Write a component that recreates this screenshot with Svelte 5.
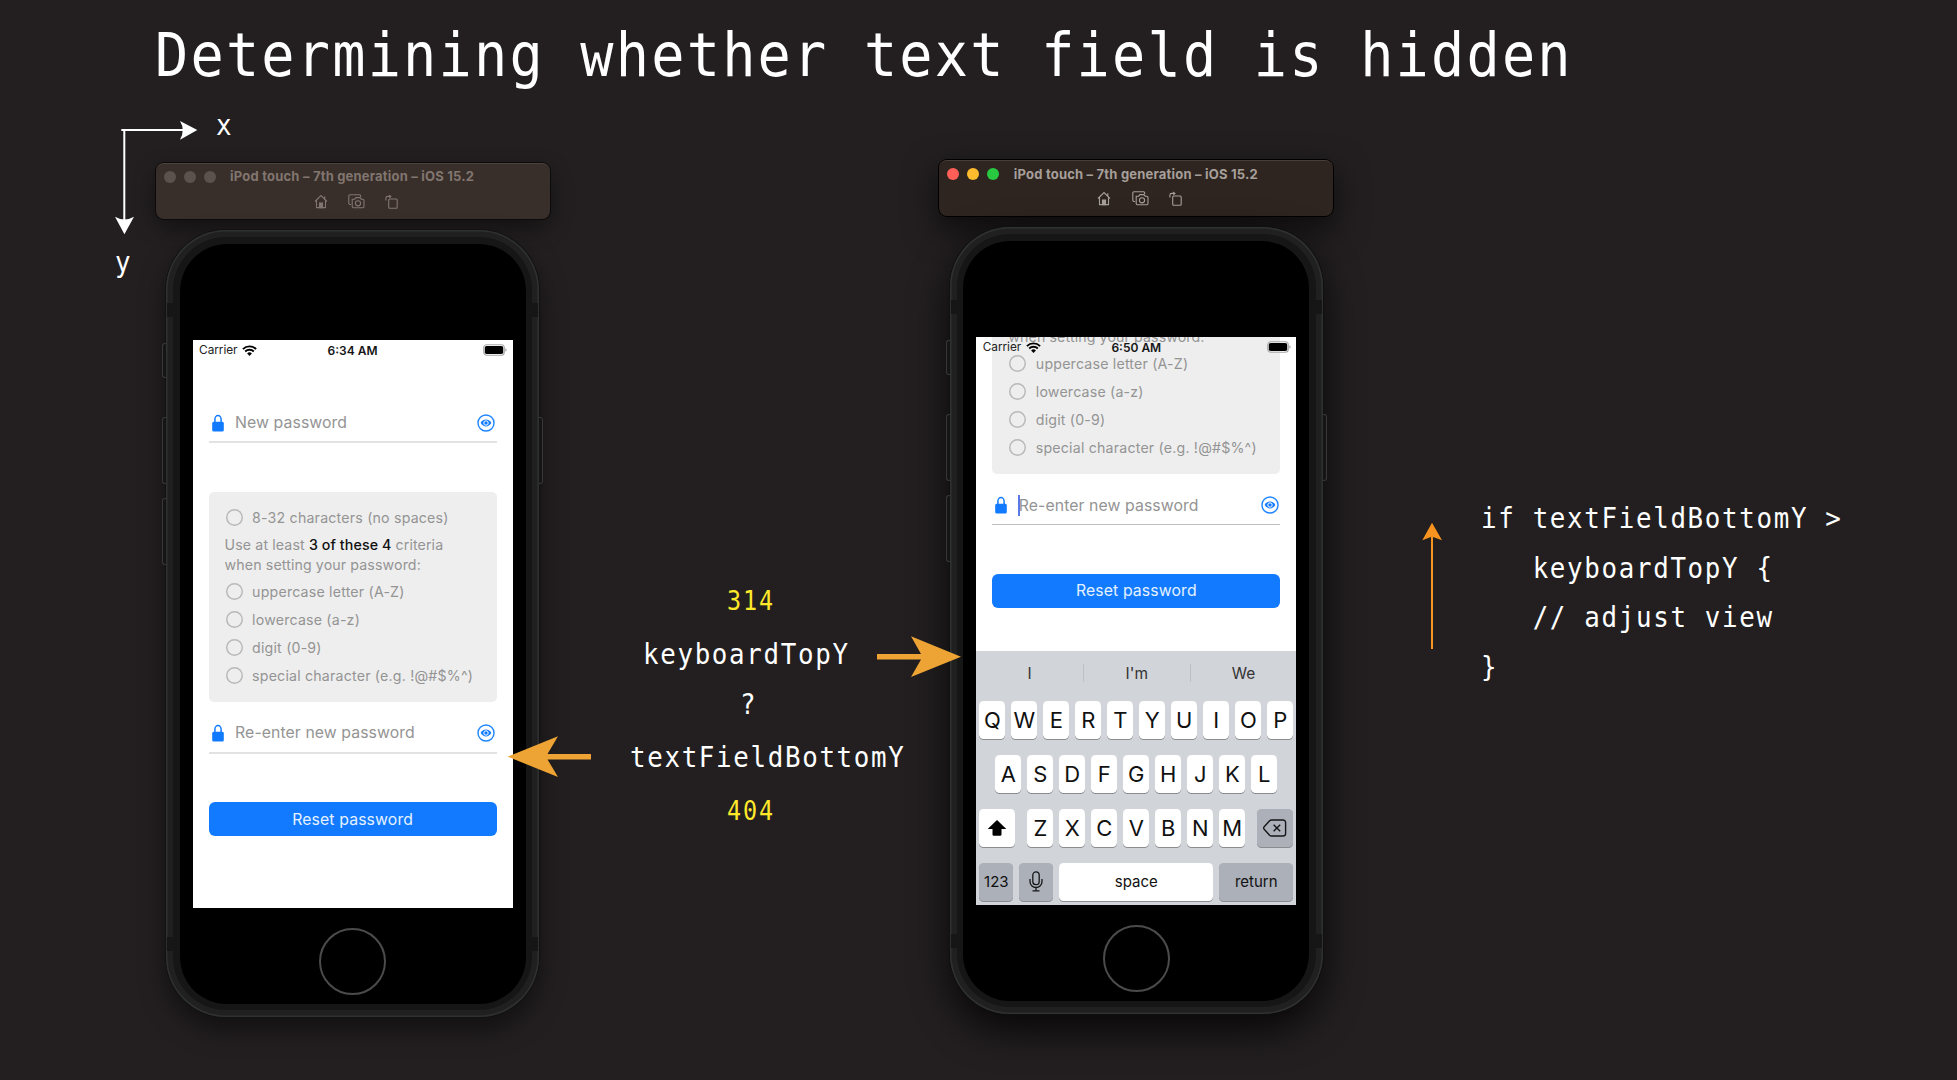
<script>
  const ruleItems = ['uppercase letter (A-Z)', 'lowercase (a-z)', 'digit (0-9)', 'special character (e.g. !@#$%^)'];
  const phones = [
    { id: 'left', time: '6:34 AM', active: false },
    { id: 'right', time: '6:50 AM', active: true }
  ];
  const suggestions = ['I', "I'm", 'We'];
  const topRow = [...'QWERTYUIOP'];
  const homeRow = [...'ASDFGHJKL'];
  const lowRow = [...'ZXCVBNM'];
  const code = `if textFieldBottomY >
   keyboardTopY {
   // adjust view
}`;
</script>

{#snippet field(label, cls, caret)}
  <div class="field {cls}">
    <svg class="lock" viewBox="0 0 12 18">
      <path d="M2.9 9V5.2a3.1 3.6 0 0 1 6.2 0V9" fill="none" stroke="#117aff" stroke-width="1.5" />
      <rect x="0.2" y="7.8" width="11.6" height="9.6" rx="1.5" fill="#117aff" />
    </svg>
    <span class="placeholder">{label}</span>
    {#if caret}<i class="caret"></i>{/if}
    <svg class="eye" viewBox="0 0 18 18">
      <circle cx="9" cy="9" r="8" fill="none" stroke="#1f86ff" stroke-width="1.4" />
      <path d="M3.6 9C5.2 6.6 7 5.6 9 5.6s3.800 1 5.400 3.400C12.800 11.400 11 12.400 9 12.400S5.200 11.400 3.600 9z" fill="#117aff" />
      <circle cx="9" cy="9" r="2.2" fill="#117aff" stroke="#fff" stroke-width="1" />
    </svg>
  </div>
{/snippet}

{#snippet rule(text)}
  <div class="rule"><i class="ring"></i><span>{text}</span></div>
{/snippet}

{#snippet key(ch)}
  <div class="key letter">{ch}</div>
{/snippet}

<main class="slide">
  <h1>Determining whether text field is hidden</h1>

  {#each phones as p}
    <section class="sim {p.id}">
      <header class="bar">
        <div class="caption">
          <div class="dots"><i></i><i></i><i></i></div>
          <strong>iPod touch – 7th generation – iOS 15.2</strong>
        </div>
        <div class="tools">
          <svg viewBox="0 0 14 15">
            <path d="M1 7.500 7 1.500l6 6M2.500 6.500V13.600h9V6.500M10.800 4.800V2.200" />
            <path class="solid" d="M5.500 13.600V9h3v4.600z" />
          </svg>
          <svg class="cam" viewBox="0 0 17 15">
            <path d="M3 10.500H2A1.200 1.200 0 0 1 .8 9.300V2A1.200 1.200 0 0 1 2 .8h9.500a1.200 1.200 0 0 1 1.200 1.200v1" />
            <path d="M4.200 5.200h2.400L8 3.600h4L13.200 5.200h1.600a1.200 1.200 0 0 1 1.200 1.200v6.200a1.200 1.200 0 0 1-1.200 1.200H5.400a1.200 1.200 0 0 1-1.200-1.200z" />
            <circle cx="10" cy="9.300" r="2.600" />
          </svg>
          <svg viewBox="0 0 14 15">
            <rect x="3.700" y="5" width="8.500" height="9.300" rx="1" />
            <path d="M.9 6.500V4.200A1.800 1.800 0 0 1 2.700 2.400h2.300" />
            <path class="solid" d="M4.200.4 6.800 2.400 4.200 4.400z" stroke="none" />
          </svg>
        </div>
      </header>

      <div class="device">
        <i class="side mute"></i><i class="side up"></i><i class="side down"></i><i class="side power"></i>
        <div class="shell">
          <i class="band b1"></i><i class="band b2"></i><i class="band b3"></i><i class="band b4"></i>
          <div class="glass">
            <div class="screen">
              <div class="status">
                <span class="carrier">Carrier</span>
                <svg class="wifi" viewBox="0 0 15 11">
                  <path d="M.9 4.100a9.400 9.400 0 0 1 13.200 0" />
                  <path d="M3.200 6.500a6.200 6.200 0 0 1 8.600 0" />
                  <path class="tip" d="M5.100 8.500a3.500 3.500 0 0 1 4.800 0L7.500 10.900z" />
                </svg>
                <b>{p.time}</b>
                <svg class="battery" viewBox="0 0 24 12">
                  <rect x="0.700" y="0.700" width="20.600" height="10.600" rx="3" fill="none" stroke="#a8a8a8" stroke-width="1.100" />
                  <rect x="1.800" y="1.900" width="18.400" height="8.200" rx="1.800" />
                  <path d="M22.300 4.200q1.400.5 1.400 1.800t-1.400 1.800z" fill="#a8a8a8" />
                </svg>
              </div>
              <div class="form">
                {@render field('New password', 'first', false)}
                <div class="card">
                  {@render rule('8-32 characters (no spaces)')}
                  <p>Use at least <em>3 of these 4</em> criteria<br />when setting your password:</p>
                  {#each ruleItems as r}{@render rule(r)}{/each}
                </div>
                {@render field('Re-enter new password', 'second', p.active)}
                <div class="submit">Reset password</div>
              </div>
              {#if p.active}
                <div class="keyboard">
                  <div class="suggest">
                    {#each suggestions as s}<span>{s}</span>{/each}
                  </div>
                  <div class="row">{#each topRow as k}{@render key(k)}{/each}</div>
                  <div class="row">{#each homeRow as k}{@render key(k)}{/each}</div>
                  <div class="row spread">
                    <div class="key wide">
                      <svg width="20" height="18" viewBox="0 0 20 18"><path d="M10 1 19.300 10H14.500v5.500a1.300 1.300 0 0 1-1.300 1.300H6.800a1.300 1.300 0 0 1-1.300-1.300V10H.7z" /></svg>
                    </div>
                    <div class="group">{#each lowRow as k}{@render key(k)}{/each}</div>
                    <div class="key wide dark">
                      <svg width="24" height="18" viewBox="0 0 24 18" fill="none" stroke="#161718" stroke-width="1.400">
                        <path d="M8.500 1H20a2.600 2.600 0 0 1 2.600 2.600v10.800A2.600 2.600 0 0 1 20 17H8.500a2.600 2.600 0 0 1-1.900-.8L1.200 10.300a1.800 1.800 0 0 1 0-2.600L6.600 1.800A2.600 2.600 0 0 1 8.500 1zM10.600 5.700l6.600 6.600M17.200 5.700l-6.600 6.600" />
                      </svg>
                    </div>
                  </div>
                  <div class="row">
                    <div class="key dark num">123</div>
                    <div class="key dark num">
                      <svg width="14" height="21" viewBox="0 0 14 21" fill="none" stroke="#161718" stroke-width="1.300">
                        <rect x="3.800" y="0.900" width="6.400" height="12.800" rx="3.200" />
                        <path d="M1 8v2.500a6 6 0 0 0 12 0V8M7 16.500v3.300M3.500 19.900h7" />
                      </svg>
                    </div>
                    <div class="key space">space</div>
                    <div class="key dark return">return</div>
                  </div>
                </div>
              {/if}
            </div>
            <div class="home"></div>
          </div>
        </div>
      </div>
    </section>
  {/each}

  <svg class="arrows" viewBox="0 0 1957 1080">
    <g fill="#fff">
      <path d="M121.300 129H185v2.100H125.300V220H123.300V131.100H121.300z" />
      <path d="M197.300 130 180 121q5.500 9 0 18.700z" />
      <path d="M124.400 234.300 115 216.700q9.400 5.500 19 0z" />
    </g>
    <path d="M507.700 756.700 558 736.300 547.500 754H591v5.400H547.500L558 777z" fill="#eea434" />
    <path d="M961 656.700 911 636.300 921 654H877v5.400H921L911 677z" fill="#eea434" />
    <path d="M1432 522.700 1442 540.300 1433 537V649H1431V537L1422.300 540.300z" fill="#f7931e" />
  </svg>

  <span class="mono note axis-x">x</span>
  <span class="mono note axis-y">y</span>
  <span class="mono note value n314">314</span>
  <span class="mono note kb">keyboardTopY</span>
  <span class="mono note qm">?</span>
  <span class="mono note tf">textFieldBottomY</span>
  <span class="mono note value n404">404</span>
  <pre class="mono code">{code}</pre>
</main>

<style>
  :global(body) { background: #231f20; }
  .slide {
    position: relative; width: 1957px; height: 1080px; overflow: hidden;
    background: #231f20; color: #fff; font-family: Inter, "Liberation Sans", sans-serif;
  }
  i, em { font-style: normal; }
  svg { display: block; flex: none; }
  h1, .mono { font-family: "DejaVu Sans Mono", monospace; font-weight: 400; transform: scaleX(0.9); transform-origin: 0 0; }
  h1 {
    margin: 0 0 0 154.500px; padding-top: 20px; font-size: 61.300px; line-height: 70px;
    letter-spacing: 2.480px; white-space: nowrap;
  }
  .note { position: absolute; font-size: 28.700px; line-height: 40px; letter-spacing: 1.860px; white-space: pre; }
  .value { color: #ffe92a; font-size: 26px; letter-spacing: 2.100px; }
  .axis-x { left: 215.500px; top: 105.400px; }
  .axis-y { left: 115.300px; top: 242px; }
  .n314 { left: 726.800px; top: 581px; }
  .kb { left: 642.800px; top: 634px; }
  .qm { left: 740px; top: 684px; }
  .tf { left: 629.800px; top: 737px; }
  .n404 { left: 726.800px; top: 790.600px; }
  .code {
    position: absolute; left: 1480.500px; top: 494.400px; margin: 0;
    font-size: 28.700px; line-height: 49.500px; letter-spacing: 1.860px;
  }
  .arrows { position: absolute; inset: 0; width: 1957px; height: 1080px; z-index: 2; }

  .sim { position: absolute; width: 394px; display: flex; flex-direction: column; align-items: center; }
  .sim.left { left: 155.600px; top: 162.600px; }
  .sim.right { left: 939.300px; top: 159.700px; }

  .bar {
    box-sizing: border-box; width: 394px; height: 56.400px; border-radius: 8px; background: #382e2a;
    border-top: 1px solid #4b423e; box-shadow: 0 0 0 1px #0c0a0a, 0 8px 22px rgba(0, 0, 0, 0.45);
    color: #81766f; padding: 5.400px 8px 0;
  }
  .right .bar { background: #2e2520; border-top-color: #4a3d38; color: #a79f9a; box-shadow: 0 0 0 1px #000, 0 12px 34px rgba(0, 0, 0, 0.65); }
  .caption { display: flex; align-items: center; height: 16px; gap: 14.500px; }
  .dots { display: flex; gap: 8px; padding-top: 0.600px; }
  .dots i { width: 12px; height: 12px; border-radius: 50%; background: #5c524d; }
  .right .dots i:nth-child(1) { background: #ff5f57; }
  .right .dots i:nth-child(2) { background: #febc2e; }
  .right .dots i:nth-child(3) { background: #28c840; }
  .caption strong { font-size: 13px; font-weight: 700; letter-spacing: 0.200px; white-space: nowrap; margin-top: -1px; }
  .tools { display: flex; gap: 20.300px; padding: 9px 0 0 150px; }
  .tools svg { width: 14px; height: 15px; fill: none; stroke: currentColor; stroke-width: 1.100; }
  .tools svg.cam { width: 17px; }
  .tools .solid { fill: currentColor; }

  .device { position: relative; margin-top: 11.300px; }
  .shell {
    position: relative; box-sizing: border-box; width: 373px; height: 786.700px; padding: 13.700px 13.500px 13.300px;
    border-radius: 60px; background: #202020; border: 0;
    box-shadow: 0 0 0 1px #121212, inset 0 0 0 1.500px #2f3030, inset 0 0 0 7px #202020, inset 0 0 0 14px #161616, 0 12px 26px rgba(0, 0, 0, 0.5);
  }
  .right .shell { box-shadow: 0 0 0 1px #101010, inset 0 0 0 1.500px #2f3030, inset 0 0 0 7px #202020, inset 0 0 0 14px #161616, 0 16px 38px rgba(0, 0, 0, 0.8); }
  .glass {
    box-sizing: border-box; width: 346px; height: 759.700px; border-radius: 47px; background: #000;
    padding: 95.700px 13px 0; display: flex; flex-direction: column; align-items: center;
  }
  .screen { width: 320px; height: 568px; background: #fff; overflow: hidden; position: relative; flex: none; color: #000; }
  .home { width: 63px; height: 63px; border: 2px solid #4b4b4b; border-radius: 50%; margin-top: 20.500px; }
  .side {
    position: absolute; z-index: 1; width: 4px; box-sizing: border-box; background: #151515;
    border: 1px solid #383838; border-right: 0; left: -4px; border-radius: 3px 0 0 3px;
  }
  .mute { top: 113px; height: 35px; }
  .up { top: 187px; height: 67px; }
  .down { top: 268px; height: 67px; }
  .power { top: 187px; height: 67px; left: auto; right: -4px; border: 1px solid #383838; border-left: 0; border-radius: 0 3px 3px 0; }
  .band { position: absolute; width: 6px; height: 14px; background: #161616; }
  .b1, .b3 { left: 1px; }
  .b2, .b4 { right: 1px; }
  .b1, .b2 { top: 73px; }
  .b3, .b4 { bottom: 66px; }

  .status {
    position: absolute; inset: 0 0 auto; height: 21px; z-index: 1; display: grid;
    grid-template-columns: auto auto 1fr auto; align-items: center; padding: 0 5.800px 0 6.500px; font-size: 11.800px;
  }
  .carrier { letter-spacing: -0.050px; color: #222; }
  .status b { position: absolute; left: 0; right: 0; text-align: center; font-weight: 600; font-size: 12px; color: #161616; letter-spacing: 0; }
  .wifi { width: 15px; height: 11px; margin-left: 5px; fill: none; stroke: #000; stroke-width: 1.900; }
  .wifi .tip { fill: #000; stroke: none; }
  .battery { width: 24px; height: 12px; grid-column: 4; }

  .form { padding: 64.300px 16px 0; }
  .right .form { margin-top: -225.500px; }
  .field {
    box-sizing: border-box; height: 39.400px; border-bottom: 2px solid #e2e2e2; display: flex; align-items: center;
    padding: 0 1.300px 0 3px; position: relative; font-size: 15.800px; color: #949494;
  }
  .right .field { border-bottom: 1px solid #bfbfbf; }
  .lock { width: 12px; height: 18px; margin-right: 11.500px; }
  .eye { width: 18px; height: 18px; margin-left: auto; }
  .placeholder { letter-spacing: 0.080px; white-space: nowrap; }
  .caret { position: absolute; left: 26px; top: 9px; width: 2px; height: 21.500px; background: #5b78e8; }
  .card {
    box-sizing: border-box; height: 210px; margin-top: 48.600px; border-radius: 5px; background: #eee;
    padding: 12px 16px; color: #949494; font-size: 14.200px;
  }
  .rule { display: flex; align-items: center; height: 28px; gap: 9.500px; white-space: nowrap; letter-spacing: 0.190px; padding-left: 1px; }
  .ring { width: 17px; height: 17px; box-shadow: inset 0 0 0 1.500px #b9b9b9; border-radius: 50%; flex: none; }
  .card p { margin: 0 0 3px; line-height: 20px; padding-top: 3px; white-space: nowrap; letter-spacing: 0.110px; }
  .card em { color: #111; font-weight: 500; }
  .second { margin-top: 12.300px; }
  .submit {
    margin-top: 48.400px; height: 34.400px; border-radius: 6px; background: #117aff; color: #e4f1ff;
    font-size: 15.800px; display: flex; align-items: center; justify-content: center; letter-spacing: 0.120px;
  }

  .keyboard {
    position: absolute; left: 0; right: 0; top: 314px; height: 254px; box-sizing: border-box; z-index: 1;
    background: #d1d4d9; padding: 0 3px; color: #111;
  }
  .suggest { height: 50px; display: grid; grid-template-columns: repeat(3, 1fr); margin: 0 -3px; box-sizing: border-box; padding: 13.500px 0 18.500px; }
  .suggest span { display: flex; align-items: center; justify-content: center; font-size: 15.500px; color: #333; height: 18px; }
  .suggest span + span { border-left: 1px solid #bdc0c5; }
  .row { display: flex; justify-content: center; gap: 6px; height: 38px; margin-bottom: 16px; }
  .spread { justify-content: space-between; }
  .group { display: flex; gap: 6px; }
  .key {
    display: flex; align-items: center; justify-content: center; background: #fff; border-radius: 4.500px;
    box-shadow: 0 1px 0 #8a8c90; font-size: 15px; height: 38px; box-sizing: border-box;
  }
  .letter { width: 26px; font-size: 22px; }
  .wide { width: 36px; }
  .dark { background: #abb0b9; }
  .num { width: 34px; }
  .space { width: 154px; }
  .return { width: 74px; }
</style>
